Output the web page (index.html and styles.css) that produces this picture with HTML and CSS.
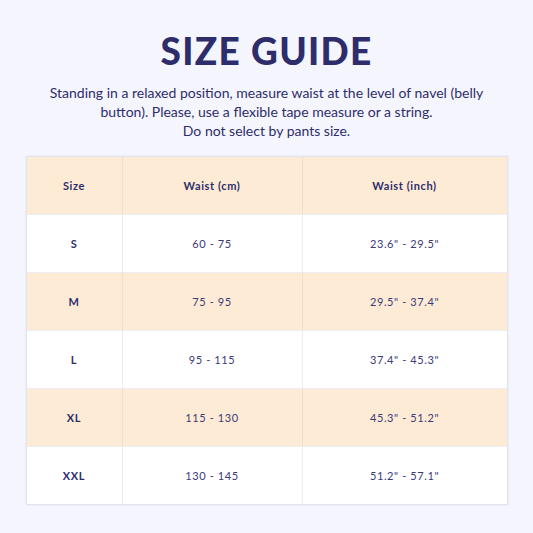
FILE: index.html
```html
<!DOCTYPE html>
<html>
<head>
<meta charset="utf-8">
<link rel="stylesheet" href="styles.css">
</head>
<body>
<div class="page">
  <h1 class="title">SIZE GUIDE</h1>
  <p class="intro">Standing in a relaxed position, measure waist at the level of navel (belly button). Please, use a flexible tape measure or a string.<br>Do not select by pants size.</p>
  <div class="table">
    <div class="row peach head"><div class="c1">Size</div><div class="c2">Waist (cm)</div><div class="c3">Waist (inch)</div></div>
    <div class="row"><div class="c1 sz">S</div><div class="c2">60 - 75</div><div class="c3">23.6" - 29.5"</div></div>
    <div class="row peach"><div class="c1 sz">M</div><div class="c2">75 - 95</div><div class="c3">29.5" - 37.4"</div></div>
    <div class="row"><div class="c1 sz">L</div><div class="c2">95 - 115</div><div class="c3">37.4" - 45.3"</div></div>
    <div class="row peach"><div class="c1 sz">XL</div><div class="c2">115 - 130</div><div class="c3">45.3" - 51.2"</div></div>
    <div class="row"><div class="c1 sz">XXL</div><div class="c2">130 - 145</div><div class="c3">51.2" - 57.1"</div></div>
  </div>
</div>
</body>
</html>
```
FILE: styles.css
```css
html, body {
  margin: 0;
  padding: 0;
  background: #f5f6fd;
}
.page {
  width: 533px;
  height: 533px;
  box-sizing: border-box;
  padding-top: 30px;
  display: flex;
  flex-direction: column;
  align-items: center;
  font-family: "Lato", "Open Sans", sans-serif;
  color: #2e2d6b;
}
.title {
  margin: 0;
  font-size: 37px;
  line-height: 42px;
  font-weight: 900;
  letter-spacing: 1.3px;
  color: #2e2d6b;
}
.intro {
  margin: 11px 0 0;
  width: 450px;
  text-align: center;
  font-size: 14px;
  line-height: 19px;
  color: #2e2d6b;
}
.table {
  margin-top: 16px;
  width: 480px;
  border: 1px solid #e4e4ee;
  box-shadow: 0 0 2px rgba(60, 60, 120, 0.12);
  background: #fff;
  display: flex;
  flex-direction: column;
}
.row {
  display: grid;
  grid-template-columns: 95px 180px 1fr;
  height: 57px;
  border-top: 1px solid #ececf2;
  font-size: 11px;
  color: #3b3a78;
}
.row:first-child {
  border-top: none;
  height: 57px;
}
.row > div {
  display: flex;
  align-items: center;
  justify-content: center;
  letter-spacing: 0.6px;
}
.row > div + div {
  border-left: 1px solid #ececf2;
}
.peach {
  background: #fdebd6;
}
.peach > div + div {
  border-left-color: #f3ddc6;
}
.head {
  font-weight: 700;
  color: #2e2d6b;
}
.sz {
  font-weight: 700;
  color: #2e2d6b;
}
```
